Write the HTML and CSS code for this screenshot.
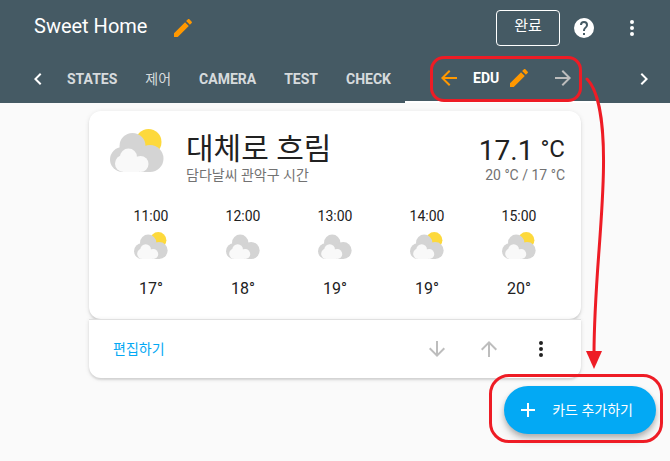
FILE: index.html
```html
<!DOCTYPE html>
<html lang="ko">
	<head>
		<meta charset="utf-8">
		<title>Sweet Home</title>
		<meta name="viewport" content="width=device-width">
		<link rel="stylesheet" href="styles.css">
	</head>
	<body>
		<!-- shared icon shapes -->
		<svg class="symbols" aria-hidden="true">
			<symbol id="pencil" viewBox="0 0 24 24"><path d="M20.71,7.04C21.1,6.65 21.1,6 20.71,5.63L18.37,3.29C18,2.9 17.35,2.9 16.96,3.29L15.12,5.12L18.87,8.87M3,17.25V21H6.75L17.81,9.93L14.06,6.18L3,17.25Z"/></symbol>
			<symbol id="dots" viewBox="0 0 24 24"><path d="M12,16A2,2 0 0,1 14,18A2,2 0 0,1 12,20A2,2 0 0,1 10,18A2,2 0 0,1 12,16M12,10A2,2 0 0,1 14,12A2,2 0 0,1 12,14A2,2 0 0,1 10,12A2,2 0 0,1 12,10M12,4A2,2 0 0,1 14,6A2,2 0 0,1 12,8A2,2 0 0,1 10,6A2,2 0 0,1 12,4Z"/></symbol>
			<symbol id="arrow" viewBox="0 0 24 24"><path d="M20 11H7.83l5.59-5.59L12 4l-8 8 8 8 1.41-1.41L7.83 13H20v-2z"/></symbol>
			<symbol id="chevron" viewBox="0 0 24 24"><path d="M15.41,16.58L10.83,12L15.41,7.41L14,6L8,12L14,18L15.41,16.58Z"/></symbol>
			<symbol id="cloud" viewBox="0 0 54 43">
				<g fill="#d4d4d4">
					<circle cx="22.5" cy="17" r="13"/>
					<circle cx="12.5" cy="30.5" r="12.5"/>
					<circle cx="40" cy="29.5" r="13.5"/>
					<path d="M12 20h28v23H12z"/>
				</g>
				<g fill="#f9f9f9">
					<circle cx="18.5" cy="28" r="8.5"/>
					<circle cx="13.5" cy="34.5" r="8.5"/>
					<circle cx="30.5" cy="35" r="8"/>
					<path d="M13 30h16v13H13z"/>
				</g>
			</symbol>
			<symbol id="partly" viewBox="0 0 54 43">
				<circle cx="38.5" cy="13" r="13" fill="#fdd93c"/>
				<use href="#cloud" width="54" height="43"/>
			</symbol>
		</svg>

		<header class="header">
			<div class="toolbar">
				<h1>Sweet Home</h1>
				<button type="button" class="icon-button accent" aria-label="Edit title"><svg class="icon"><use href="#pencil"/></svg></button>
				<button type="button" class="done">완료</button>
				<button type="button" class="icon-button" aria-label="Help"><svg class="icon" viewBox="0 0 24 24"><path d="M15.07,11.25L14.17,12.17C13.45,12.89 13,13.5 13,15H11V14.5C11,13.39 11.45,12.39 12.17,11.67L13.41,10.41C13.78,10.05 14,9.55 14,9C14,7.89 13.1,7 12,7A2,2 0 0,0 10,9H8A4,4 0 0,1 12,5A4,4 0 0,1 16,9C16,9.88 15.64,10.67 15.07,11.25M13,19H11V17H13M12,2A10,10 0 0,0 2,12A10,10 0 0,0 12,22A10,10 0 0,0 22,12C22,6.47 17.5,2 12,2Z"/></svg></button>
				<button type="button" class="icon-button" aria-label="Menu"><svg class="icon"><use href="#dots"/></svg></button>
			</div>
			<nav class="tabs">
				<button type="button" class="scroll" aria-label="Scroll left"><svg class="icon"><use href="#chevron"/></svg></button>
				<div class="tab-list">
					<a href="#states" class="tab">STATES</a>
					<a href="#control" class="tab korean">제어</a>
					<a href="#camera" class="tab">CAMERA</a>
					<a href="#test" class="tab">TEST</a>
					<a href="#check" class="tab">CHECK</a>
					<div class="tab active">
						<button type="button" class="tab-button accent" aria-label="Move left"><svg class="icon"><use href="#arrow"/></svg></button>
						<a href="#edu">EDU</a>
						<button type="button" class="tab-button edit accent" aria-label="Edit view"><svg class="icon"><use href="#pencil"/></svg></button>
						<button type="button" class="tab-button disabled" aria-label="Move right" disabled><svg class="icon flip"><use href="#arrow"/></svg></button>
					</div>
				</div>
				<button type="button" class="scroll" aria-label="Scroll right"><svg class="icon flip"><use href="#chevron"/></svg></button>
			</nav>
		</header>

		<main class="column">
			<section class="card weather">
				<div class="current">
					<svg class="weather-icon"><use href="#partly"/></svg>
					<div class="info">
						<div class="state">대체로 흐림</div>
						<div class="name">담다날씨 관악구 시간</div>
					</div>
					<div class="temps">
						<div class="temp">17.1 <span>°C</span></div>
						<div class="range">20 °C / 17 °C</div>
					</div>
				</div>
				<div class="forecast">
					<div class="hour">
						<span>11:00</span>
						<svg class="hour-icon"><use href="#partly"/></svg>
						<span class="degrees">17°</span>
					</div>
					<div class="hour">
						<span>12:00</span>
						<svg class="hour-icon"><use href="#cloud"/></svg>
						<span class="degrees">18°</span>
					</div>
					<div class="hour">
						<span>13:00</span>
						<svg class="hour-icon"><use href="#cloud"/></svg>
						<span class="degrees">19°</span>
					</div>
					<div class="hour">
						<span>14:00</span>
						<svg class="hour-icon"><use href="#partly"/></svg>
						<span class="degrees">19°</span>
					</div>
					<div class="hour">
						<span>15:00</span>
						<svg class="hour-icon"><use href="#partly"/></svg>
						<span class="degrees">20°</span>
					</div>
				</div>
			</section>
			<div class="card actions">
				<button type="button" class="edit-card">편집하기</button>
				<button type="button" class="icon-button disabled" aria-label="Move down" disabled><svg class="icon down"><use href="#arrow"/></svg></button>
				<button type="button" class="icon-button disabled" aria-label="Move up" disabled><svg class="icon up"><use href="#arrow"/></svg></button>
				<button type="button" class="icon-button" aria-label="More"><svg class="icon"><use href="#dots"/></svg></button>
			</div>
		</main>

		<button type="button" class="fab">
			<svg class="icon" viewBox="0 0 24 24"><path d="M19,13H13V19H11V13H5V11H11V5H13V11H19V13Z"/></svg>
			카드 추가하기
		</button>

		<!-- arrow from the active tab to the add button -->
		<svg class="pointer" viewBox="0 0 30 300" aria-hidden="true">
			<path d="M2 4C14 16 19 50 18.500 91C18 150 9 210 9 280" fill="none" stroke="#ee1c25" stroke-width="3" stroke-linecap="round"/>
			<path d="M1 276H17L9 294Z" fill="#ee1c25"/>
		</svg>
	</body>
</html>
```

FILE: styles.css
```css
* {
    box-sizing: border-box;
}

body {
    position: relative;
    min-height: 100vh;
    margin: 0;
    background-color: #fafafa;
    color: #212121;
    font-family: Roboto, "Noto Sans CJK KR", sans-serif;
    font-size: 14px;
    line-height: 20px;
}

h1 {
    margin: 0;
    font-size: 20px;
    font-weight: 400;
    line-height: 24px;
}

button {
    padding: 0;
    border: 0;
    background: none;
    color: inherit;
    font: inherit;
    cursor: pointer;
}

a {
    color: inherit;
    text-decoration: none;
}

.symbols {
    display: none;
}

.icon {
    display: block;
    flex: none;
    width: 24px;
    height: 24px;
    fill: currentColor;
}

.icon-button {
    display: flex;
    align-items: center;
    justify-content: center;
    width: 48px;
    height: 48px;
}

.accent {
    color: #ff9800;
}

.disabled {
    color: #bdbdbd;
}

.flip {
    transform: scaleX(-1);
}

.up {
    transform: rotate(90deg);
}

.down {
    transform: rotate(-90deg);
}

/* header */
.header {
    background-color: #455a64;
    color: #fff;
}

.toolbar {
    display: flex;
    align-items: center;
    height: 55px;
    padding: 0 14px 0 34px;
}

.toolbar h1 {
    margin: 0 12px 4px 0;
}

.done {
    width: 64px;
    height: 36px;
    margin-left: auto;
    padding-bottom: 4px;
    border: 1px solid #fff;
    border-radius: 4px;
    font-size: 15px;
}

.tabs {
    display: flex;
    align-items: center;
    height: 48px;
    padding: 0 14px 0 26px;
}

.tab-list {
    display: flex;
    flex: 1;
    margin-left: 3px;
}

.tab {
    display: flex;
    align-items: center;
    height: 48px;
    padding: 0 14px;
    color: rgba(255, 255, 255, 0.8);
    font-weight: 700;
    white-space: nowrap;
}

.tab.korean {
    font-weight: 400;
}

.tab.active {
    position: relative;
    padding: 0 22px 0 32px;
    border-bottom: 2px solid #fff;
    color: #fff;
}

.tab.active::after {
    content: "";
    position: absolute;
    top: 1px;
    right: 15px;
    bottom: -1px;
    left: 25px;
    border: 3px solid #ee1c25;
    border-radius: 14px;
    pointer-events: none;
}

.tab-button {
    margin-right: 12px;
}

.tab-button.edit {
    margin: 0 20px 0 8px;
}

.tab-button.disabled {
    margin-right: 0;
}

/* cards */
.column {
    max-width: 500px;
    margin: 0 auto;
    padding: 8px 4px;
}

.card {
    background-color: #fff;
    border-radius: 12px;
    box-shadow: 0 2px 2px rgba(0, 0, 0, 0.1), 0 1px 5px rgba(0, 0, 0, 0.1);
}

.weather {
    padding: 16px 16px 20px;
}

.current {
    display: flex;
    align-items: flex-start;
    height: 79px;
}

.weather-icon {
    width: 54px;
    height: 43px;
    margin: 2px 22px 0 5px;
}

.info {
    flex: 1;
}

.state,
.temp {
    height: 38px;
    padding-top: 8px;
    font-size: 28px;
    line-height: 32px;
}

.state {
    padding-top: 6px;
    font-size: 30px;
}

.name,
.range {
    color: #727272;
}

.name {
    font-size: 14px;
}

.temps {
    text-align: right;
}

.temp span {
    font-size: 24px;
    line-height: 24px;
    vertical-align: 3px;
}

.forecast {
    display: grid;
    grid-template-columns: repeat(5, 1fr);
}

.hour {
    display: flex;
    flex-direction: column;
    align-items: center;
}

.hour-icon {
    width: 34px;
    height: 27px;
    margin: 6px 0 20px;
}

.degrees {
    font-size: 16px;
}

.actions {
    display: flex;
    align-items: center;
    gap: 4px;
    height: 59px;
    padding: 0 16px 0 24px;
    border-top: 1px solid #e0e0e0;
    border-radius: 0 0 12px 12px;
}

.edit-card {
    margin-right: auto;
    color: #03a9f4;
}

/* add card button */
.fab {
    position: absolute;
    right: 14px;
    bottom: 27px;
    display: flex;
    align-items: center;
    gap: 12px;
    height: 48px;
    padding: 0 23px 0 12px;
    border-radius: 24px;
    background-color: #03a9f4;
    box-shadow: 0 3px 5px rgba(0, 0, 0, 0.2), 0 6px 10px rgba(0, 0, 0, 0.14);
    color: #fff;
}

.fab::after {
    content: "";
    position: absolute;
    top: -12px;
    right: -7px;
    bottom: -9px;
    left: -15px;
    border: 3px solid #ee1c25;
    border-radius: 20px;
    pointer-events: none;
}

.pointer {
    position: absolute;
    top: 75px;
    right: 55px;
    width: 30px;
    height: 300px;
    pointer-events: none;
}
```
